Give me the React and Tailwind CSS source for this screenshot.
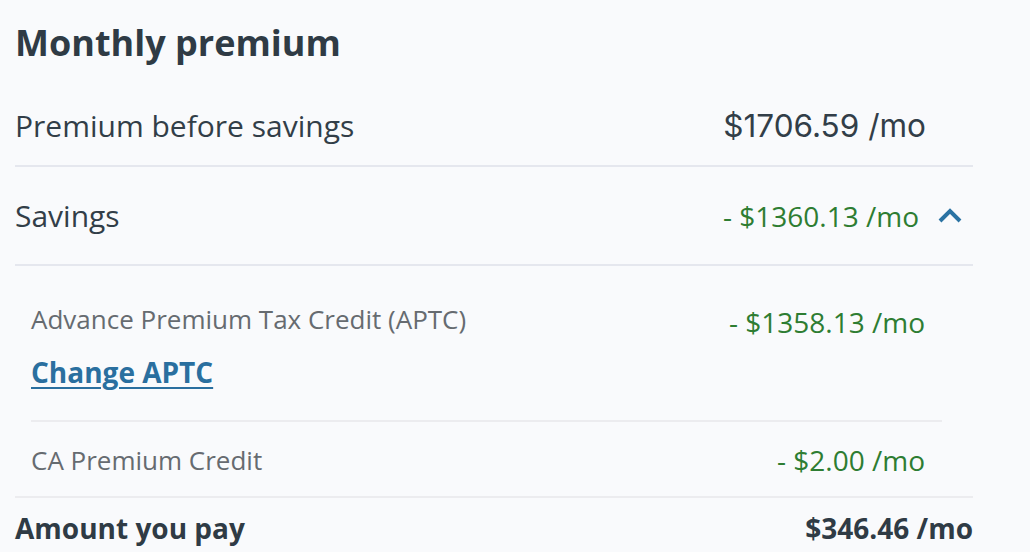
export default function App() {
  return (
    <div className="min-h-screen w-[1030px] h-[552px] overflow-hidden bg-[#f9fafc] text-[#323e48] font-['Open_Sans',sans-serif]">
      <div className="pl-[15px] w-[973px]">
        <h1 className="pt-[21px] text-[36px] leading-[44px] font-bold text-[#2f3b45]">Monthly premium</h1>

        {/* Premium before savings */}
        <div className="flex items-center justify-between pt-[41px] pb-[19px] pr-[47px] border-b-2 border-[#e5e7ee]">
          <span className="text-[30px] leading-[40px]">Premium before savings</span>
          <span className="text-[31.5px] leading-[40px] font-['Inter',sans-serif] text-[#323e48]">$1706.59 /mo</span>
        </div>

        {/* Savings */}
        <div className="flex items-center justify-between pt-[29px] pb-[28px] pr-[11px] border-b-2 border-[#e5e7ee]">
          <span className="text-[30px] leading-[40px]">Savings</span>
          <div className="flex items-center gap-[19px]">
            <span className="text-[28px] leading-[40px] text-[#2e7d32]">- $1360.13 /mo</span>
            <svg width="24" height="16" viewBox="0 0 24 16" fill="none" className="mt-[-2px]">
              <path d="M2 14 L12 4 L22 14" stroke="#2b73a3" strokeWidth="4" />
            </svg>
          </div>
        </div>

        {/* Savings breakdown */}
        <div className="pl-[16px] pr-[31px]">
          <div className="pt-[37px] pb-[31px] pr-[17px] border-b-2 border-[#ececef]">
            <div className="flex items-start justify-between">
              <span className="text-[26px] leading-[32px] text-[#666b70]">Advance Premium Tax Credit (APTC)</span>
              <span className="mt-[1px] text-[28px] leading-[36px] text-[#2e7d32]">- $1358.13 /mo</span>
            </div>
            <a href="#" className="block mt-[15px] text-[28px] leading-[34px] font-bold text-[#2a6f9f] underline underline-offset-[4px] decoration-2 w-fit">
              Change APTC
            </a>
          </div>
          <div className="flex items-center justify-between pt-[20px] pb-[18px] pr-[17px]">
            <span className="text-[26px] leading-[36px] text-[#666b70]">CA Premium Credit</span>
            <span className="text-[28px] leading-[36px] text-[#2e7d32]">- $2.00 /mo</span>
          </div>
        </div>

        <div className="border-b-2 border-[#ececef]" />

        {/* Amount you pay */}
        <div className="flex items-center justify-between pt-[12px]">
          <span className="text-[28px] leading-[36px] font-bold text-[#2f3b45]">Amount you pay</span>
          <span className="text-[28px] leading-[36px] font-bold text-[#2f3b45]">$346.46 /mo</span>
        </div>
      </div>
    </div>
  );
}
